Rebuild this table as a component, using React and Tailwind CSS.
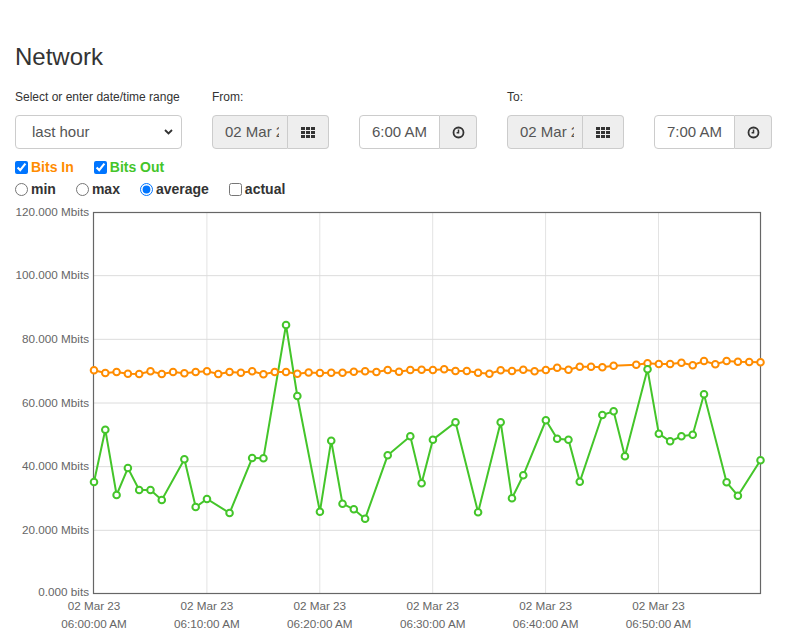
import React from "react";

const ORANGE = [
  371.3, 374, 373, 374.7, 375, 372.3, 375, 373, 374.3, 373, 372.3, 375, 373, 373.7, 372.3, 375.3, 373, 373, 374.7, 373.5,
  374, 373.7, 373.7, 372.7, 372.3, 373, 371, 372.7, 371, 370.7, 371, 370.3, 372, 372, 373.7, 374.7, 371.3, 372, 370.7, 372.3,
  371, 368.7, 370.7, 367.7, 367.7, 368.3, 366.7, null, 365.7, 364.3, 365, 365, 363.7, 366.3, 362, 365.3, 362, 362.7, 363, 363.3,
];

const GREEN = [
  [0, 483], [1, 430.7], [2, 496], [3, 469], [4, 491], [5, 491], [6, 501], [8, 460.3], [9, 508], [10, 500],
  [12, 514], [14, 459], [15, 459.3], [17, 326], [18, 397], [20, 512.7], [21, 441.7], [22, 504.7], [23, 510.3],
  [24, 519.7], [26, 456.3], [28, 437.3], [29, 484.3], [30, 440.7], [32, 423.3], [34, 513.3], [36, 423.3],
  [37, 499.3], [38, 476.3], [40, 421.3], [41, 439.7], [42, 440.7], [43, 482.7], [45, 416], [46, 412.3],
  [47, 457.3], [49, 370.3], [50, 434.7], [51, 442.3], [52, 437.3], [53, 435.7], [54, 395.3], [56, 483.3],
  [57, 496.7], [59, 461.3],
];

const X0 = 94;
const X1 = 760.5;
const Y0 = 213;
const Y1 = 595;
const xi = (i) => X0 + (i * (X1 - X0)) / 59;

const orangePts = ORANGE.map((y, i) => (y == null ? null : [xi(i), y])).filter(Boolean);
const greenPts = GREEN.map(([i, y]) => [xi(i), y]);

const yLabels = ["120.000 Mbits", "100.000 Mbits", "80.000 Mbits", "60.000 Mbits", "40.000 Mbits", "20.000 Mbits", "0.000 bits"];
const xLabels = ["06:00:00 AM", "06:10:00 AM", "06:20:00 AM", "06:30:00 AM", "06:40:00 AM", "06:50:00 AM"];

function GridIcon() {
  return (
    <svg width="14" height="11" viewBox="0 0 14 11" fill="#333">
      {[0, 1, 2].map((r) =>
        [0, 1, 2].map((c) => <rect key={`${r}${c}`} x={c * 5} y={r * 4} width="4" height="3" />)
      )}
    </svg>
  );
}

function ClockIcon() {
  return (
    <svg width="13" height="13" viewBox="0 0 13 13" fill="none" stroke="#333">
      <circle cx="6.5" cy="6.5" r="5" strokeWidth="1.8" />
      <path d="M6.5 3.5 V6.8 H4.6" strokeWidth="1.5" />
    </svg>
  );
}

function DateGroup({ value }) {
  return (
    <div className="flex h-[34px] w-[117px]">
      <div className="w-[76px] overflow-hidden whitespace-nowrap rounded-l-[4px] border border-[#ccc] bg-[#eee] pl-[12px] text-[15px] leading-[32px] text-[#555]">
        <div className="w-[54px] overflow-hidden whitespace-nowrap">{value}</div>
      </div>
      <div className="flex w-[41px] items-center justify-center rounded-r-[4px] border border-l-0 border-[#ccc] bg-[#eee]">
        <GridIcon />
      </div>
    </div>
  );
}

function TimeGroup({ value }) {
  return (
    <div className="flex h-[34px] w-[118px]">
      <div className="w-[81px] rounded-l-[4px] border border-[#ccc] bg-white text-center text-[15px] leading-[32px] text-[#555]">
        {value}
      </div>
      <div className="flex w-[37px] items-center justify-center rounded-r-[4px] border border-l-0 border-[#ccc] bg-[#eee]">
        <ClockIcon />
      </div>
    </div>
  );
}

function Chart() {
  const toPath = (pts) => pts.map(([x, y], i) => `${i ? "L" : "M"}${x.toFixed(1)} ${y}`).join(" ");
  return (
    <svg width="787" height="434" viewBox="0 200 787 434" className="block" fontFamily="'Liberation Sans', Arial, sans-serif">
      {[1, 2, 3, 4, 5].map((k) => {
        const x = X0 + k * 112.9;
        return <line key={`v${k}`} x1={x} x2={x} y1={Y0} y2={Y1} stroke="#e3e3e3" strokeWidth="1" />;
      })}
      {[1, 2, 3, 4, 5].map((k) => {
        const y = Y0 + (k * (Y1 - Y0)) / 6;
        return <line key={`h${k}`} x1={X0} x2={X1} y1={y} y2={y} stroke="#dcdcdc" strokeWidth="1" />;
      })}
      <rect x={93.5} y={213.5} width={667} height={381} fill="none" stroke="#666" strokeWidth="1.2" />
      {yLabels.map((t, k) => (
        <text key={t} x="89" y={Y0 + (k * (Y1 - Y0)) / 6 + (k === 6 ? 2 : 3.5)} textAnchor="end" fontSize="11.7" fill="#666">
          {t}
        </text>
      ))}
      {xLabels.map((t, k) => {
        const x = X0 + k * 112.9;
        return (
          <g key={t}>
            <text x={x} y="611" textAnchor="middle" fontSize="11.7" fill="#666">02 Mar 23</text>
            <text x={x} y="628.5" textAnchor="middle" fontSize="11.7" fill="#666">{t}</text>
          </g>
        );
      })}
      <path d={toPath(orangePts)} fill="none" stroke="#ff8c00" strokeWidth="2" />
      <path d={toPath(greenPts)} fill="none" stroke="#44c52a" strokeWidth="2" />
      {orangePts.map(([x, y], i) => (
        <circle key={`o${i}`} cx={x} cy={y} r="3.3" fill="#fff" stroke="#ff8c00" strokeWidth="2" />
      ))}
      {greenPts.map(([x, y], i) => (
        <circle key={`g${i}`} cx={x} cy={y} r="3.3" fill="#fff" stroke="#44c52a" strokeWidth="2" />
      ))}
    </svg>
  );
}

export default function App() {
  return (
    <div className="h-[634px] w-[787px] overflow-hidden bg-white font-['Liberation_Sans',Arial,sans-serif] text-[#333]">
      <div className="px-[15px]">
        <h1 className="mt-[42px] h-[30px] text-[24px] font-normal leading-[30px]">Network</h1>
        <div className="mt-[16px] flex gap-[30px]">
          <div className="w-[167px]">
            <div className="h-[17px] text-[12px] leading-[18px]">Select or enter date/time range</div>
            <div className="relative mt-[10px] h-[34px]">
              <select className="h-[34px] w-[167px] appearance-none rounded-[4px] border border-[#ccc] bg-white pl-[16px] text-[15px] text-[#555] outline-none">
                <option>last hour</option>
              </select>
              <svg className="pointer-events-none absolute right-[9px] top-[14px]" width="9" height="6" viewBox="0 0 9 6" fill="none" stroke="#333" strokeWidth="1.8">
                <path d="M1 1 L4.5 4.5 L8 1" />
              </svg>
            </div>
          </div>
          <div>
            <div className="h-[17px] text-[12px] leading-[18px]">From:</div>
            <div className="mt-[10px] flex gap-[30px]">
              <DateGroup value="02 Mar 2023" />
              <TimeGroup value="6:00 AM" />
            </div>
          </div>
          <div>
            <div className="h-[17px] text-[12px] leading-[18px]">To:</div>
            <div className="mt-[10px] flex gap-[30px]">
              <DateGroup value="02 Mar 2023" />
              <TimeGroup value="7:00 AM" />
            </div>
          </div>
        </div>
        <div className="mt-[8px] flex h-[20px] items-center gap-[20px] text-[14px] font-bold leading-[20px]">
          <label className="flex items-center gap-[3px] text-[#ff8c00]">
            <input type="checkbox" defaultChecked className="m-0 h-[13px] w-[13px]" />
            Bits In
          </label>
          <label className="flex items-center gap-[3px] text-[#44c52a]">
            <input type="checkbox" defaultChecked className="m-0 h-[13px] w-[13px]" />
            Bits Out
          </label>
        </div>
        <div className="mt-[2px] flex h-[20px] items-center gap-[20px] text-[14px] font-bold leading-[20px] text-[#333]">
          <label className="flex items-center gap-[3px]">
            <input type="radio" name="agg" className="m-0 h-[13px] w-[13px]" />
            min
          </label>
          <label className="flex items-center gap-[3px]">
            <input type="radio" name="agg" className="m-0 h-[13px] w-[13px]" />
            max
          </label>
          <label className="flex items-center gap-[3px]">
            <input type="radio" name="agg" defaultChecked className="m-0 h-[13px] w-[13px]" />
            average
          </label>
          <label className="flex items-center gap-[3px]">
            <input type="checkbox" className="m-0 h-[13px] w-[13px]" />
            actual
          </label>
        </div>
      </div>
      <Chart />
    </div>
  );
}
